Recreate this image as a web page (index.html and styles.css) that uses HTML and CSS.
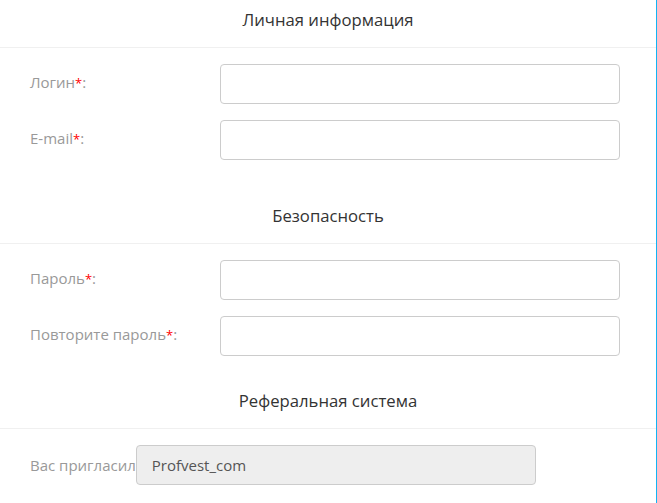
FILE: index.html
```html
<!DOCTYPE html>
<html lang="ru">
<head>
<meta charset="utf-8">
<link rel="stylesheet" href="styles.css">
</head>
<body>
<div class="page">
  <section class="section section-first">
    <h2 class="section-title">Личная информация</h2>
    <div class="section-body">
      <div class="row">
        <label class="label">Логин<span class="req">*</span>:</label>
        <input class="field" type="text">
      </div>
      <div class="row">
        <label class="label">E-mail<span class="req">*</span>:</label>
        <input class="field" type="text">
      </div>
    </div>
  </section>
  <section class="section section-second">
    <h2 class="section-title">Безопасность</h2>
    <div class="section-body">
      <div class="row">
        <label class="label">Пароль<span class="req">*</span>:</label>
        <input class="field" type="password">
      </div>
      <div class="row">
        <label class="label">Повторите пароль<span class="req">*</span>:</label>
        <input class="field" type="password">
      </div>
    </div>
  </section>
  <section class="section">
    <h2 class="section-title">Реферальная система</h2>
    <div class="section-body">
      <div class="row row-ref">
        <label class="label label-ref">Вас пригласил</label>
        <input class="field field-disabled" type="text" value="Profvest_com" disabled>
      </div>
    </div>
  </section>
</div>
</body>
</html>
```

FILE: styles.css
```css
html, body {
  margin: 0;
  padding: 0;
  background: #fff;
}
body {
  font-family: "Open Sans", Lato, sans-serif;
}
.page {
  width: 656px;
  min-height: 100vh;
  border-right: 1px solid #11b4f5;
  box-sizing: content-box;
}
.section-title {
  margin: 0;
  padding: 10px 0 17px;
  line-height: 20px;
  font-size: 16.7px;
  font-weight: 400;
  color: #333;
  text-align: center;
  border-bottom: 1px solid #f0f0f0;
}
.section-body {
  display: flex;
  flex-direction: column;
  gap: 16px;
  padding-top: 16px;
}
.section-first {
  padding-bottom: 36px;
}
.section-second {
  padding-bottom: 25px;
}
.row {
  display: flex;
  align-items: center;
  padding-left: 30px;
}
.label {
  width: 190px;
  font-size: 15px;
  line-height: 20px;
  margin-top: -3px;
  color: #999;
}
.req {
  color: #f00;
  font-size: 13px;
}
.field {
  width: 400px;
  height: 40px;
  box-sizing: border-box;
  border: 1px solid #ccc;
  border-radius: 4px;
  background: #fff;
  padding: 0 15px;
  font-family: inherit;
  font-size: 15px;
  color: #555;
  margin: 0;
}
.label-ref {
  width: auto;
  white-space: nowrap;
  margin-top: 0;
}
.field-disabled {
  background: #eee;
  -webkit-text-fill-color: #555;
  opacity: 1;
}
```
